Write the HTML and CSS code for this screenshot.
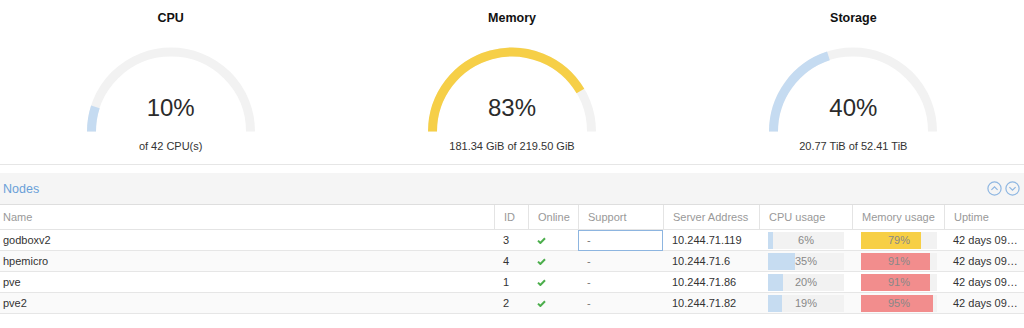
FILE: index.html
```html
<!DOCTYPE html>
<html lang="en">
<head>
    <meta charset="UTF-8">
    <title>Datacenter Summary</title>
    <link rel="stylesheet" href="styles.css">
</head>
<body>
    <div class="summary">
        <div class="gauge">
            <div class="gauge-title">CPU</div>
            <div class="gauge-dial">
                <svg width="180" height="87" viewBox="0 0 180 87">
                    <path class="track" d="M 10.5 86.5 A 79.5 79.5 0 0 1 169.5 86.5"/>
                    <path class="fill-blue" d="M 10.5 86.5 A 79.5 79.5 0 0 1 14.39 61.93"/>
                </svg>
                <div class="gauge-value">10%</div>
            </div>
            <div class="gauge-text">of 42 CPU(s)</div>
        </div>
        <div class="gauge">
            <div class="gauge-title">Memory</div>
            <div class="gauge-dial">
                <svg width="180" height="87" viewBox="0 0 180 87">
                    <path class="track" d="M 10.5 86.5 A 79.5 79.5 0 0 1 169.5 86.5"/>
                    <path class="fill-yellow" d="M 10.5 86.5 A 79.5 79.5 0 0 1 158.43 46.03"/>
                </svg>
                <div class="gauge-value">83%</div>
            </div>
            <div class="gauge-text">181.34 GiB of 219.50 GiB</div>
        </div>
        <div class="gauge">
            <div class="gauge-title">Storage</div>
            <div class="gauge-dial">
                <svg width="180" height="87" viewBox="0 0 180 87">
                    <path class="track" d="M 10.5 86.5 A 79.5 79.5 0 0 1 169.5 86.5"/>
                    <path class="fill-blue" d="M 10.5 86.5 A 79.5 79.5 0 0 1 65.43 10.89"/>
                </svg>
                <div class="gauge-value">40%</div>
            </div>
            <div class="gauge-text">20.77 TiB of 52.41 TiB</div>
        </div>
    </div>

    <div class="panel">
        <div class="panel-header">
            <span class="panel-title">Nodes</span>
            <span class="panel-tools">
                <svg width="15" height="15" viewBox="0 0 15 15"><circle cx="7.5" cy="7.5" r="6.6"/><path d="M4.4 8.9 L7.5 5.8 L10.6 8.9"/></svg>
                <svg width="15" height="15" viewBox="0 0 15 15"><circle cx="7.5" cy="7.5" r="6.6"/><path d="M4.4 6.1 L7.5 9.2 L10.6 6.1"/></svg>
            </span>
        </div>
        <table class="nodes">
            <colgroup>
                <col style="width:494px">
                <col style="width:34px">
                <col style="width:50px">
                <col style="width:85px">
                <col style="width:96px">
                <col style="width:93px">
                <col style="width:92px">
                <col>
            </colgroup>
            <thead>
                <tr>
                    <th class="name">Name</th>
                    <th>ID</th>
                    <th>Online</th>
                    <th>Support</th>
                    <th>Server Address</th>
                    <th>CPU usage</th>
                    <th>Memory usage</th>
                    <th>Uptime</th>
                </tr>
            </thead>
            <tbody>
                <tr>
                    <td class="name">godboxv2</td>
                    <td>3</td>
                    <td><svg class="check" width="9" height="7" viewBox="0 0 9 7"><path d="M1 3.6 L3.4 6 L8 1.2"/></svg></td>
                    <td class="muted focused">-</td>
                    <td>10.244.71.119</td>
                    <td><div class="bar"><div class="bar-fill blue" style="width:6%"></div><span class="bar-label">6%</span></div></td>
                    <td><div class="bar"><div class="bar-fill yellow" style="width:79%"></div><span class="bar-label">79%</span></div></td>
                    <td class="uptime">42 days 09…</td>
                </tr>
                <tr>
                    <td class="name">hpemicro</td>
                    <td>4</td>
                    <td><svg class="check" width="9" height="7" viewBox="0 0 9 7"><path d="M1 3.6 L3.4 6 L8 1.2"/></svg></td>
                    <td class="muted">-</td>
                    <td>10.244.71.6</td>
                    <td><div class="bar"><div class="bar-fill blue" style="width:35%"></div><span class="bar-label">35%</span></div></td>
                    <td><div class="bar"><div class="bar-fill red" style="width:91%"></div><span class="bar-label">91%</span></div></td>
                    <td class="uptime">42 days 09…</td>
                </tr>
                <tr>
                    <td class="name">pve</td>
                    <td>1</td>
                    <td><svg class="check" width="9" height="7" viewBox="0 0 9 7"><path d="M1 3.6 L3.4 6 L8 1.2"/></svg></td>
                    <td class="muted">-</td>
                    <td>10.244.71.86</td>
                    <td><div class="bar"><div class="bar-fill blue" style="width:20%"></div><span class="bar-label">20%</span></div></td>
                    <td><div class="bar"><div class="bar-fill red" style="width:91%"></div><span class="bar-label">91%</span></div></td>
                    <td class="uptime">42 days 09…</td>
                </tr>
                <tr>
                    <td class="name">pve2</td>
                    <td>2</td>
                    <td><svg class="check" width="9" height="7" viewBox="0 0 9 7"><path d="M1 3.6 L3.4 6 L8 1.2"/></svg></td>
                    <td class="muted">-</td>
                    <td>10.244.71.82</td>
                    <td><div class="bar"><div class="bar-fill blue" style="width:19%"></div><span class="bar-label">19%</span></div></td>
                    <td><div class="bar"><div class="bar-fill red" style="width:95%"></div><span class="bar-label">95%</span></div></td>
                    <td class="uptime">42 days 09…</td>
                </tr>
            </tbody>
        </table>
    </div>
</body>
</html>
```

FILE: styles.css
```css
body {
    margin: 0;
    font-family: "Liberation Sans", Arial, sans-serif;
    background-color: #fff;
    color: #333;
}
.summary {
    display: grid;
    grid-template-columns: repeat(3, 1fr);
    height: 164px;
    border-bottom: 1px solid #e6e6e6;
}
.gauge {
    display: flex;
    flex-direction: column;
    align-items: center;
}
.gauge-title {
    margin-top: 11px;
    font-size: 12.5px;
    font-weight: bold;
    line-height: 15px;
    color: #111;
}
.gauge-dial {
    position: relative;
    width: 180px;
    height: 87px;
    margin-top: 19px;
}
.gauge-dial svg {
    display: block;
}
.gauge-dial path {
    fill: none;
    stroke-width: 9;
}
.track {
    stroke: #f2f2f2;
}
.fill-blue {
    stroke: #c5dbf1;
}
.fill-yellow {
    stroke: #f6cf47;
}
.gauge-value {
    position: absolute;
    left: 0;
    right: 0;
    top: 49px;
    text-align: center;
    font-size: 24px;
    line-height: 28px;
    color: #2b2b2b;
}
.gauge-text {
    margin-top: 7px;
    font-size: 11px;
    line-height: 14px;
    color: #333;
}
.panel {
    margin-top: 8px;
}
.panel-header {
    display: flex;
    justify-content: space-between;
    align-items: center;
    height: 31px;
    padding: 0 4px 0 3px;
    background-color: #f5f5f5;
    border-bottom: 1px solid #dedede;
}
.panel-title {
    font-size: 12.5px;
    color: #6a9fd8;
}
.panel-tools {
    display: flex;
    gap: 3px;
}
.panel-tools svg {
    display: block;
}
.panel-tools circle,
.panel-tools path {
    fill: none;
    stroke: #8fb7e2;
    stroke-width: 1.2;
}
.nodes {
    width: 100%;
    table-layout: fixed;
    border-collapse: separate;
    border-spacing: 0;
    font-size: 11px;
}
.nodes th {
    height: 24px;
    padding: 0 9px;
    text-align: left;
    font-weight: normal;
    color: #999;
    border-bottom: 1px solid #e4e4e4;
    border-left: 1px solid #e4e4e4;
    white-space: nowrap;
}
.nodes th.name {
    border-left: none;
}
.nodes td {
    height: 20px;
    padding: 0 9px;
    border-bottom: 1px solid #e6e6e6;
    white-space: nowrap;
    color: #333;
}
.nodes .name {
    padding-left: 3px;
}
.nodes td.uptime {
    padding-right: 0;
}
.nodes tbody tr:nth-child(even) td {
    background-color: #fafafa;
}
.nodes td.muted {
    color: #777;
}
.nodes td.focused {
    outline: 1px solid #8db5e0;
    outline-offset: -1px;
}
.check {
    display: block;
}
.check path {
    fill: none;
    stroke: #4cae4c;
    stroke-width: 2;
}
.bar {
    position: relative;
    width: 76px;
    height: 17px;
    background-color: #f2f2f2;
}
.bar-fill {
    height: 100%;
}
.bar-fill.blue {
    background-color: #c6dcf1;
}
.bar-fill.yellow {
    background-color: #f7cf45;
}
.bar-fill.red {
    background-color: #f28d8d;
}
.bar-label {
    position: absolute;
    left: 0;
    right: 0;
    top: 0;
    text-align: center;
    line-height: 17px;
    color: #888;
}
```
